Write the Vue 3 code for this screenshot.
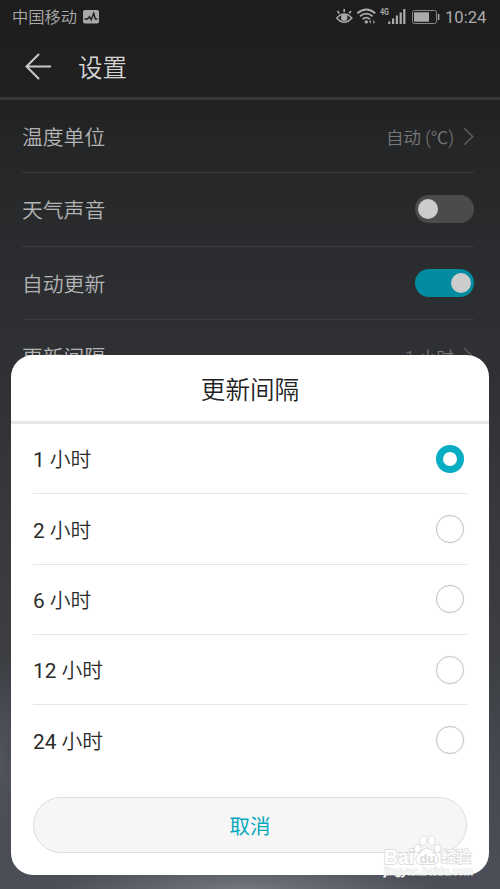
<script setup>
import { ref } from 'vue'

const settings = [
  { label: '温度单位', value: '自动 (℃)' },
  { label: '天气声音', toggle: true, on: false },
  { label: '自动更新', toggle: true, on: true },
  { label: '更新间隔', value: '1 小时' },
]
const intervals = [1, 2, 6, 12, 24]
const selected = ref(1)
</script>

<template>
  <div class="screen">
    <div class="status">
      <span class="carrier">中国移动</span>
      <svg class="pulse" width="16" height="14" viewBox="0 0 16 14">
        <rect width="16" height="13.5" rx="2" fill="#a8a8a8" />
        <path d="M1.5 9h3l2-2.2 1.7 3 2.5-6.5L12.3 9H14.5" fill="none" stroke="#222" stroke-width="1.5" />
      </svg>
      <span class="spacer"></span>
      <svg class="icons" width="104" height="20" viewBox="0 0 104 20">
        <g fill="none" stroke="#aaa" stroke-width="1.6">
          <path d="M.8 11Q8.2 3 15.8 11Q8.2 19.5 .8 11Z" />
          <path d="M8.2 5V2M3.3 6.5L1.5 4M13.2 6.5L15 4" />
        </g>
        <circle cx="8.2" cy="10.8" r="3.2" fill="#aaa" />
        <g fill="none" stroke="#aaa" stroke-width="1.8">
          <path d="M21.3 6.3Q30.3-1.2 39.3 6.3" />
          <path d="M24 9.3Q30.3 4 36.5 9.3" />
          <path d="M26.6 12.3Q30.3 9 34 12.3" />
        </g>
        <circle cx="30.3" cy="14.9" r="1.7" fill="#aaa" />
        <path d="M32.8 14.8l2.2 2v-4zM39.3 15l-2.2 2v-4z" fill="#888" />
        <text class="network" x="44" y="8.2" textLength="9" lengthAdjust="spacingAndGlyphs">4G</text>
        <path d="M52.2 14.5h2.2V17h-2.2zM56 11.5h2.2V17H56zM59.8 8.5H62V17h-2.2zM63.6 5.5h2.2V17h-2.2zM67.2 2h2.2v15h-2.2z" fill="#aaa" />
        <rect x="76.5" y="3.5" width="24" height="13" rx="2" fill="none" stroke="#888" />
        <rect x="78" y="5.3" width="15" height="9.4" fill="#aaa" />
        <path d="M102.6 7v6" stroke="#aaa" stroke-width="1.5" />
      </svg>
      <span class="clock">10:24</span>
    </div>

    <header class="appbar">
      <svg width="28" height="28" viewBox="0 0 28 28" fill="none" stroke="#c9c9c9" stroke-width="2" stroke-linecap="round">
        <path d="M26.2 14.5H2.5M14.5 2.5L2.500 14.500l12 12" />
      </svg>
      <h1>设置</h1>
    </header>

    <main class="settings">
      <div v-for="s in settings" :key="s.label" class="setting">
        <span class="label">{{ s.label }}</span>
        <span v-if="s.toggle" class="switch" :class="{ on: s.on }"><i></i></span>
        <span v-else class="value">
          <span class="value-text">{{ s.value }}</span>
          <svg width="11" height="19" viewBox="0 0 11 19" fill="none" stroke="#5b5c5e" stroke-width="1.5">
            <path d="M1.2 1.2L9.7 9.5 1.2 17.8" />
          </svg>
        </span>
      </div>
    </main>

    <section class="dialog" role="dialog">
      <h2>更新间隔</h2>
      <div class="options">
        <div v-for="n in intervals" :key="n" class="option" @click="selected = n">
          <span class="hours"><span class="num">{{ n }}</span> 小时</span>
          <span class="radio" :class="{ checked: selected === n }"></span>
        </div>
      </div>
      <button class="cancel">取消</button>
    </section>

    <svg class="watermark" width="100" height="56" viewBox="0 0 100 56">
      <g class="brand">
        <text x="4" y="30.5" textLength="30" lengthAdjust="spacingAndGlyphs">Bai</text>
        <path d="M47 15.500c-4 0-5 4-8.500 6.500-4 3-2.500 9.500 3.500 9h10c6 .5 7.500-6 3.500-9-3.500-2.500-4.500-6.500-8.500-6.500z" />
        <ellipse cx="37.5" cy="15.500" rx="2.700" ry="3.800" />
        <ellipse cx="43.300" cy="7.500" rx="2.900" ry="4.300" />
        <ellipse cx="51.700" cy="7.500" rx="2.900" ry="4.300" />
        <ellipse cx="57.500" cy="15.500" rx="2.700" ry="3.800" />
        <text class="du" x="39.500" y="29.500">du</text>
        <text class="cn" x="61" y="29">经验</text>
      </g>
      <text class="url" x="4" y="42" textLength="89" lengthAdjust="spacingAndGlyphs">jingyan.baidu.com</text>
    </svg>
  </div>
</template>

<style>
body {
  margin: 0;
}
</style>

<style scoped>
.screen {
  position: relative;
  width: 500px;
  height: 889px;
  overflow: hidden;
  box-sizing: border-box;
  font-family: Roboto, "Noto Sans CJK SC", sans-serif;
  font-weight: 350;
  background:
    radial-gradient(ellipse 190px 28px at 245px 889px, #737780, transparent),
    radial-gradient(ellipse 24px 100px at 0 765px, #50545c, transparent),
    linear-gradient(#1d1d1d 0, #212121 95px, #252627 150px, #2c2d30 280px, #313236 400px, #37393d 520px, #3c3e42 650px, #454850 760px, #4c4f57 889px);
}
.status {
  display: flex;
  align-items: center;
  height: 34px;
  padding: 0 14px 0 12px;
  color: #aaa;
  font-size: 16px;
}
.carrier {
  padding-top: 2px;
  font-size: 16.3px;
  line-height: 20px;
}
.pulse {
  margin-left: 6px;
}
.spacer {
  flex: 1;
}
.network {
  font: 700 9px Roboto, sans-serif;
  fill: #aaa;
}
.icons {
  margin-right: 5px;
}
.clock {
  width: 41px;
  padding-top: 1px;
  font-size: 16.6px;
  font-weight: 400;
  white-space: nowrap;
}
.appbar {
  display: flex;
  align-items: center;
  gap: 26px;
  box-sizing: border-box;
  height: 66px;
  padding: 0 24px;
  border-bottom: 3px solid #3a3a3a;
}
h1,
h2 {
  margin: 0;
  font-weight: 350;
}
h1 {
  padding-top: 7px;
  color: #d4d4d4;
  font-size: 24.5px;
  line-height: 36px;
}
.settings {
  padding: 0 26px 0 22px;
}
.setting {
  display: flex;
  align-items: center;
  justify-content: space-between;
  box-sizing: border-box;
  height: 73.3px;
  border-bottom: 1px solid #3b3c3e;
  color: #b3b4b5;
  font-size: 20.8px;
  line-height: 30px;
}
.label {
  padding-top: 4px;
}
.value {
  display: flex;
  align-items: center;
  gap: 9px;
  color: #77787a;
  font-size: 17.5px;
}
.value-text {
  padding-top: 3px;
}
.switch {
  display: flex;
  box-sizing: border-box;
  width: 59px;
  height: 28px;
  padding: 4px 3px;
  border-radius: 14px;
  background: #4a4b4d;
}
.switch i {
  width: 20px;
  height: 20px;
  border-radius: 50%;
  background: #ccc;
}
.switch.on {
  justify-content: flex-end;
  background: #038c9f;
}
.dialog {
  position: absolute;
  left: 11px;
  top: 355px;
  display: flex;
  flex-direction: column;
  width: 478px;
  height: 520px;
  border-radius: 22px;
  background: #fff;
}
h2 {
  box-sizing: border-box;
  height: 69px;
  border-bottom: 3px solid #e6e6e6;
  color: #222;
  font-size: 24.6px;
  line-height: 72px;
  text-align: center;
}
.options {
  padding: 0 22px;
}
.option {
  display: flex;
  align-items: center;
  justify-content: space-between;
  box-sizing: border-box;
  height: 70.35px;
  padding-right: 3px;
  border-bottom: 1px solid #e5e5e5;
  color: #2b2b2b;
  font-size: 20.8px;
  line-height: 30px;
}
.hours {
  padding-top: 3px;
}
.num {
  font-weight: 400;
}
.option:last-child {
  border-color: transparent;
}
.radio {
  box-sizing: border-box;
  width: 28px;
  height: 28px;
  border: 1.5px solid #c4c4c4;
  border-radius: 50%;
  box-shadow: 0 0 1px #ccc;
}
.radio.checked {
  border: 7px solid #06adc3;
  box-shadow: none;
}
.cancel {
  height: 56px;
  margin: 21px 22px 0;
  padding-top: 6px;
  border: 1px solid #ddd;
  border-radius: 28px;
  background: #f6f6f6;
  color: #06a9bd;
  font: 400 20.5px/30px Roboto, "Noto Sans CJK SC", sans-serif;
}
.watermark {
  position: absolute;
  left: 380px;
  top: 833px;
}
.brand {
  fill: #fff;
  stroke: #dedede;
  stroke-width: 2px;
  paint-order: stroke;
  font: 700 20px "Liberation Sans", sans-serif;
}
.brand .du {
  fill: #dadada;
  stroke: none;
  font-size: 13px;
}
.brand .cn {
  font: 500 15px "Noto Sans CJK SC", sans-serif;
}
.url {
  fill: #fff;
  stroke: #e2e2e2;
  stroke-width: 1px;
  paint-order: stroke;
  font: 400 11px "Liberation Sans", sans-serif;
}
</style>
